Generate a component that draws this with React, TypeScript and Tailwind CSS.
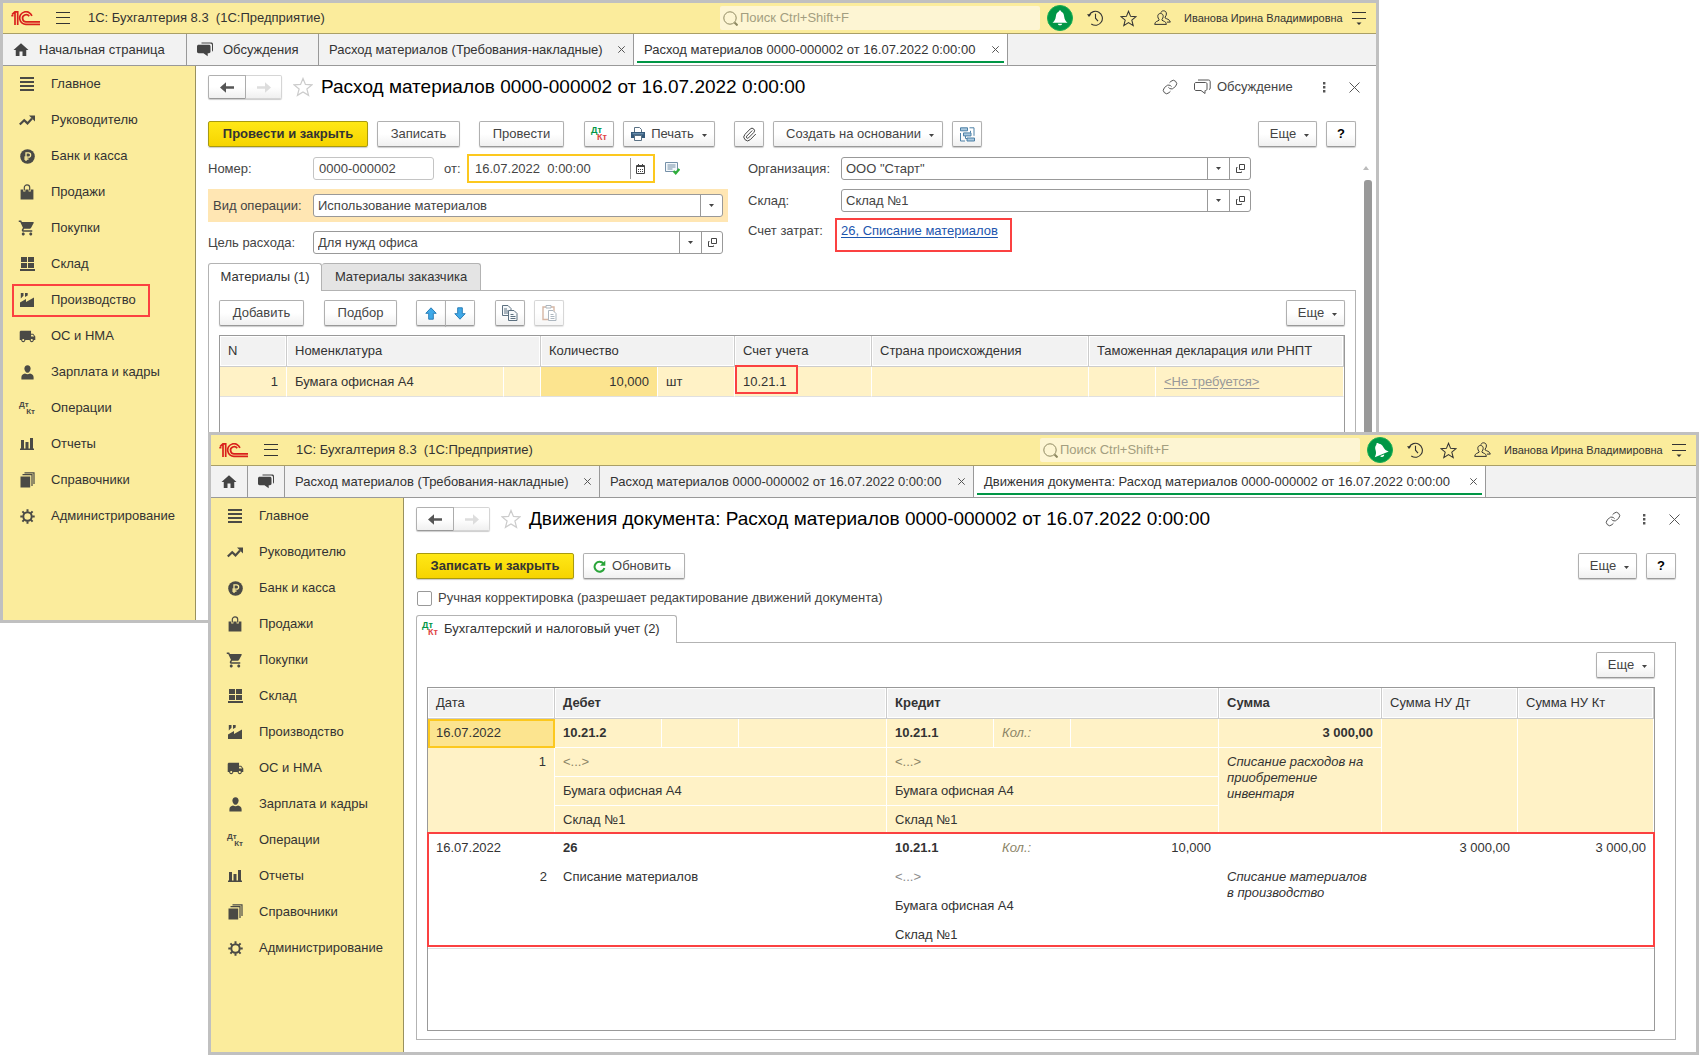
import type { ReactNode } from "react";
import clsx from "clsx";
import { Link as LinkIcon, Paperclip } from "lucide-react";
import { MdHome, MdLocalShipping, MdShoppingCart } from "react-icons/md";

const NAV: { label: string; icon: ReactNode }[] = [
  { label: "Главное", icon: <BarsIcon /> },
  { label: "Руководителю", icon: <TrendIcon /> },
  { label: "Банк и касса", icon: <RubleIcon /> },
  { label: "Продажи", icon: <BagIcon /> },
  { label: "Покупки", icon: <MdShoppingCart size={18} /> },
  { label: "Склад", icon: <WarehouseIcon /> },
  { label: "Производство", icon: <FactoryIcon /> },
  { label: "ОС и НМА", icon: <MdLocalShipping size={17} /> },
  { label: "Зарплата и кадры", icon: <PersonIcon /> },
  { label: "Операции", icon: <DtKt mono /> },
  { label: "Отчеты", icon: <ChartIcon /> },
  { label: "Справочники", icon: <BooksIcon /> },
  { label: "Администрирование", icon: <GearIcon /> },
];

export default function App() {
  return (
    <div className="min-h-screen bg-white font-['Liberation_Sans',Arial,sans-serif] text-[13px] leading-4 text-[#444]">
      <DocumentWindow />
      <MovementsWindow />
    </div>
  );
}

/* ---------- Windows ---------- */

function DocumentWindow() {
  return (
    <section className="mr-80 flex min-h-[623px] flex-col border-[3px] border-[#c0c0c0] bg-white" aria-label="Расход материалов">
      <TopBar id="doc" />
      <nav className="flex h-8 border-b border-[#999] bg-[#f2f2f2]" aria-label="Открытые окна">
        <Tab width="w-[184px]" icon={<MdHome size={18} />}>Начальная страница</Tab>
        <Tab width="w-[132px]" icon={<ChatsIcon />}>Обсуждения</Tab>
        <Tab width="w-[315px]" closable>Расход материалов (Требования-накладные)</Tab>
        <Tab width="w-[374px]" closable active>Расход материалов 0000-000002 от 16.07.2022 0:00:00</Tab>
      </nav>
      <div className="flex flex-1">
        <Sidebar marked="Производство" />
        <main className="flex min-w-0 flex-1 flex-col pl-3 pt-[9px]">
          <TitleRow title="Расход материалов 0000-000002 от 16.07.2022 0:00:00" discussion />

          <div className="mt-[22px] flex pr-5">
            <Button primary className="w-40">Провести и закрыть</Button>
            <Button className="ml-[9px] w-[83px]">Записать</Button>
            <Button className="ml-[19px] w-[85px]">Провести</Button>
            <Button className="ml-5 w-[30px]" label="Движения документа"><DtKt /></Button>
            <Button className="ml-[9px] w-[92px]"><PrinterIcon /><span className="ml-1.5">Печать</span><Caret /></Button>
            <Button className="ml-[19px] w-[30px]" label="Файлы"><Paperclip size={15} strokeWidth={1.6} /></Button>
            <Button className="ml-[9px] w-[170px]"><span className="ml-1">Создать на основании</span><Caret /></Button>
            <Button className="ml-[9px] w-[30px]" label="Структура подчиненности"><StructureIcon /></Button>
            <MoreButton className="ml-auto" />
            <Button className="ml-[9px] w-[30px] font-bold text-black">?</Button>
          </div>

          <div className="flex flex-1 pt-[7px]">
            <div className="flex min-w-0 flex-1 flex-col">
              <DocumentForm />
              <MaterialsPanel />
            </div>
            <div className="flex w-5 flex-col items-center pt-3" aria-hidden="true">
              <svg width="6" height="4"><path d="M3 0 6 4H0z" fill="#bbb" /></svg>
              <div className="ml-1 mt-2.5 w-2 flex-1 rounded-t-[3px] bg-[#999]" />
            </div>
          </div>
        </main>
      </div>
    </section>
  );
}

function DocumentForm() {
  return (
    <form className="flex gap-5">
      <div className="w-[520px]">
        <div className="flex h-[29px] items-center">
          <label htmlFor="number" className="w-[105px]">Номер:</label>
          <input id="number" defaultValue="0000-000002" className="h-[23px] w-[121px] rounded-[3px] border border-[#c4c4c4] px-[5px]" />
          <label htmlFor="date" className="ml-2.5 w-[23px]">от:</label>
          <div className="flex h-[29px] w-[188px] items-center border-2 border-[#fcc81e]">
            <input id="date" defaultValue="16.07.2022  0:00:00" className="w-[161px] px-1.5 outline-none" />
            <button type="button" aria-label="Выбрать дату" className="flex h-[21px] flex-1 items-center border-l border-[#999] pl-[5px]">
              <CalendarIcon />
            </button>
          </div>
          <span className="ml-2.5"><PostedIcon /></span>
        </div>
        <div className="mt-1.5 flex h-[33px] items-center bg-[#ffe6b3] px-[5px]">
          <label htmlFor="operation" className="w-[100px]">Вид операции:</label>
          <Combo id="operation" value="Использование материалов" />
        </div>
        <div className="mt-[9px] flex items-center pr-[5px]">
          <label htmlFor="purpose" className="w-[105px]">Цель расхода:</label>
          <Combo id="purpose" value="Для нужд офиса" open />
        </div>
      </div>
      <div className="max-w-[503px] flex-1 pt-[3px]">
        <div className="flex items-center">
          <label htmlFor="org" className="w-[93px]">Организация:</label>
          <Combo id="org" value='ООО "Старт"' open />
        </div>
        <div className="mt-[9px] flex items-center">
          <label htmlFor="store" className="w-[93px]">Склад:</label>
          <Combo id="store" value="Склад №1" open />
        </div>
        <div className="mt-2 flex h-[22px] items-center">
          <span className="w-[93px]">Счет затрат:</span>
          <span className="relative">
            <a href="#cost" className="text-[#1c55ae] underline underline-offset-2">26, Списание материалов</a>
            <Marker className="-left-1.5 -top-[5px] h-[34px] w-[177px]" />
          </span>
        </div>
      </div>
    </form>
  );
}

function MaterialsPanel() {
  return (
    <>
      <div className="mt-[9px] flex items-end" role="tablist">
        <button role="tab" aria-selected="true" className="relative -mb-px h-7 w-[114px] rounded-t-[3px] border border-b-0 border-[#b3b3b3] bg-white pb-0.5 text-[#333]">
          Материалы (1)
        </button>
        <button role="tab" aria-selected="false" className="h-[27px] w-[159px] rounded-t-[3px] border border-b-0 border-l-0 border-[#b3b3b3] bg-[#e4e4e4] text-[#333]">
          Материалы заказчика
        </button>
      </div>
      <div className="flex flex-1 flex-col border border-b-0 border-[#b3b3b3] px-2.5 pt-[9px]">
        <div className="flex">
          <Button className="w-[85px]">Добавить</Button>
          <Button className="ml-5 w-[73px]">Подбор</Button>
          <Button className="ml-[19px] w-[30px] rounded-r-none" label="Вверх"><ArrowIcon /></Button>
          <Button className="-ml-px w-[30px] rounded-l-none" label="Вниз"><ArrowIcon down /></Button>
          <Button className="ml-5 w-[30px]" label="Скопировать"><CopyIcon /></Button>
          <Button className="ml-[9px] w-[30px] opacity-50" label="Вставить"><PasteIcon /></Button>
          <MoreButton className="ml-auto" />
        </div>
        <div className="mt-[9px] flex-1 border border-b-0 border-[#999]">
          <table className="w-full table-fixed border-separate border-spacing-0 text-left text-[#333]">
            <colgroup>
              <col className="w-[67px]" />
              <col className="w-[217px]" />
              <col className="w-[37px]" />
              <col className="w-[117px]" />
              <col className="w-[77px]" />
              <col className="w-[137px]" />
              <col className="w-[217px]" />
              <col className="w-[67px]" />
              <col />
            </colgroup>
            <thead>
              <tr>
                <Th>N</Th>
                <Th span={2}>Номенклатура</Th>
                <Th span={2}>Количество</Th>
                <Th>Счет учета</Th>
                <Th>Страна происхождения</Th>
                <Th span={2}>Таможенная декларация или РНПТ</Th>
              </tr>
            </thead>
            <tbody className="[&_td]:border-b [&_td]:border-r [&_td]:border-b-[#e0e0e0] [&_td]:border-r-white [&_td]:bg-[#fff2c6] [&_td]:px-2">
              <tr className="h-[30px]">
                <td className="text-right">1</td>
                <td>Бумага офисная А4</td>
                <td />
                <td className="bg-[#fce48f]! text-right">10,000</td>
                <td>шт</td>
                <td className="relative">10.21.1<Marker className="-top-0.5 left-0 h-[29px] w-[63px]" /></td>
                <td />
                <td />
                <td><a href="#none" className="text-[#999] underline underline-offset-2">&lt;Не требуется&gt;</a></td>
              </tr>
            </tbody>
          </table>
        </div>
      </div>
    </>
  );
}

function MovementsWindow() {
  return (
    <section className="relative -mt-[191px] ml-52 flex min-h-[623px] flex-col border-[3px] border-[#c0c0c0] bg-white" aria-label="Движения документа">
      <TopBar id="mov" tilted />
      <nav className="flex h-8 border-b border-[#999] bg-[#f2f2f2]" aria-label="Открытые окна">
        <Tab width="w-[37px]" icon={<MdHome size={18} />} label="Начальная страница" />
        <Tab width="w-[37px]" icon={<ChatsIcon />} label="Обсуждения" />
        <Tab width="w-[315px]" closable>Расход материалов (Требования-накладные)</Tab>
        <Tab width="w-[374px]" closable>Расход материалов 0000-000002 от 16.07.2022 0:00:00</Tab>
        <Tab width="w-[512px]" closable active>Движения документа: Расход материалов 0000-000002 от 16.07.2022 0:00:00</Tab>
      </nav>
      <div className="flex flex-1">
        <Sidebar />
        <main className="flex min-w-0 flex-1 flex-col pb-3 pl-3 pt-[9px]">
          <TitleRow title="Движения документа: Расход материалов 0000-000002 от 16.07.2022 0:00:00" />

          <div className="mt-[22px] flex pr-5">
            <Button primary className="w-[158px]">Записать и закрыть</Button>
            <Button className="ml-[9px] w-[102px]"><RefreshIcon /><span className="ml-1.5 mr-1">Обновить</span></Button>
            <MoreButton className="ml-auto" />
            <Button className="ml-[9px] w-[30px] font-bold text-black">?</Button>
          </div>

          <label className="mt-[11px] flex items-center">
            <input type="checkbox" className="ml-px h-[15px] w-[15px] appearance-none rounded-[2px] border border-[#999] bg-white" />
            <span className="ml-1.5">Ручная корректировка (разрешает редактирование движений документа)</span>
          </label>

          <div className="mt-[9px] flex" role="tablist">
            <button role="tab" aria-selected="true" className="relative -mb-px flex h-7 w-[261px] items-center rounded-t-[3px] border border-b-0 border-[#b3b3b3] bg-white pb-0.5 pl-[5px] text-[#333]">
              <DtKt />
              <span className="ml-1.5">Бухгалтерский и налоговый учет (2)</span>
            </button>
          </div>
          <div className="mr-5 flex flex-1 flex-col border border-[#b3b3b3] pb-2 pl-2.5 pr-5 pt-[9px]">
            <MoreButton className="self-end" />
            <MovementsTable />
          </div>
        </main>
      </div>
    </section>
  );
}

function MovementsTable() {
  return (
    <div className="mt-[9px] flex-1 border border-[#999]">
      <table className="w-full table-fixed border-separate border-spacing-0 text-left text-[#333] [&_tbody_td]:px-2 [&_tbody_td]:pt-1.5 [&_tbody_td]:align-top">
        <colgroup>
          <col className="w-[127px]" />
          <col className="w-[107px]" />
          <col className="w-[77px]" />
          <col />
          <col className="w-[107px]" />
          <col className="w-[77px]" />
          <col />
          <col className="w-[163px]" />
          <col className="w-[136px]" />
          <col className="w-[136px]" />
        </colgroup>
        <thead>
          <tr>
            <Th>Дата</Th>
            <Th span={3} bold>Дебет</Th>
            <Th span={3} bold>Кредит</Th>
            <Th bold>Сумма</Th>
            <Th>Сумма НУ Дт</Th>
            <Th>Сумма НУ Кт</Th>
          </tr>
        </thead>
        <tbody className="[&_td]:border-b [&_td]:border-r [&_td]:border-white [&_td]:bg-[#fff2c6]">
          <tr className="h-[29px]">
            <td className="bg-[#fce48f]! outline-2 -outline-offset-2 outline-[#fcc81e]">16.07.2022</td>
            <td className="font-bold">10.21.2</td>
            <td />
            <td />
            <td className="font-bold">10.21.1</td>
            <td className="italic text-[#8c8567]">Кол.:</td>
            <td />
            <td className="text-right font-bold">3 000,00</td>
            <td rowSpan={4} />
            <td rowSpan={4} />
          </tr>
          <tr className="h-[29px]">
            <td rowSpan={3} className="text-right">1</td>
            <td colSpan={3} className="text-[#8c8567]">&lt;...&gt;</td>
            <td colSpan={3} className="text-[#8c8567]">&lt;...&gt;</td>
            <td rowSpan={3} className="italic">Списание расходов на приобретение инвентаря</td>
          </tr>
          <tr className="h-[29px]">
            <td colSpan={3}>Бумага офисная А4</td>
            <td colSpan={3}>Бумага офисная А4</td>
          </tr>
          <tr className="h-7">
            <td colSpan={3}>Склад №1</td>
            <td colSpan={3}>Склад №1</td>
          </tr>
        </tbody>
        <tbody className="relative">
          <tr className="h-[29px]">
            <td>16.07.2022<Marker className="-left-px -right-px -top-0.5 bottom-0.5" /></td>
            <td colSpan={3} className="font-bold">26</td>
            <td className="font-bold">10.21.1</td>
            <td className="italic text-[#8c8567]">Кол.:</td>
            <td className="text-right">10,000</td>
            <td />
            <td className="text-right">3 000,00</td>
            <td className="text-right">3 000,00</td>
          </tr>
          <tr className="h-[29px]">
            <td className="text-right">2</td>
            <td colSpan={3}>Списание материалов</td>
            <td colSpan={3} className="text-[#8c8c8c]">&lt;...&gt;</td>
            <td rowSpan={3} className="border-b border-[#e0e0e0] italic">Списание материалов в производство</td>
            <td rowSpan={3} className="border-b border-[#e0e0e0]" />
            <td rowSpan={3} className="border-b border-[#e0e0e0]" />
          </tr>
          <tr className="h-[29px]">
            <td />
            <td colSpan={3} />
            <td colSpan={3}>Бумага офисная А4</td>
          </tr>
          <tr className="h-7 [&_td]:border-b [&_td]:border-[#e0e0e0]">
            <td />
            <td colSpan={3} />
            <td colSpan={3}>Склад №1</td>
          </tr>
        </tbody>
      </table>
    </div>
  );
}

/* ---------- Shared parts ---------- */

function TopBar({ id, tilted }: { id: string; tilted?: boolean }) {
  return (
    <header className="flex h-[31px] items-center border-b border-[#aa9f66] bg-[#fbec9c] pl-2 pr-2.5 text-[#333]">
      <LogoIcon />
      <button aria-label="Главное меню" className="ml-4">
        <svg width="14" height="12" stroke="#333"><path d="M0 .5h14M0 5.5h14M0 11.5h14" /></svg>
      </button>
      <span className="ml-[18px] whitespace-pre">1С: Бухгалтерия 8.3  (1С:Предприятие)</span>
      <div className="ml-auto flex h-6 w-80 items-center rounded-[2px] bg-[#fdf5d3] pl-[3px]">
        <svg width="15" height="15" viewBox="0 0 15 15" fill="none" stroke="#8f8962" aria-hidden="true">
          <circle cx="7" cy="7" r="6.2" />
          <path d="m11.5 11.5 3 3" strokeWidth="2" />
        </svg>
        <input id={`${id}-search`} aria-label="Поиск" placeholder="Поиск Ctrl+Shift+F" className="ml-0.5 flex-1 placeholder:text-[#a39e80] outline-none" />
      </div>
      <button aria-label="Уведомления" className="ml-[7px]"><BellIcon tilted={tilted} /></button>
      <button aria-label="История" className="ml-3.5"><HistoryIcon /></button>
      <button aria-label="Избранное" className="ml-[17px]"><StarIcon size={17} /></button>
      <button aria-label="Пользователи" className="ml-[17px]"><UsersIcon /></button>
      <a href="#user" className="ml-[13px] w-[155px] whitespace-nowrap text-[11px]">Иванова Ирина Владимировна</a>
      <button aria-label="Сервис и настройки" className="ml-[13px]">
        <svg width="14" height="13" fill="none" stroke="#333"><path d="M0 .5h14M0 6.5h14" /><path d="M4.5 10.5h5L7 13z" fill="#333" stroke="none" /></svg>
      </button>
    </header>
  );
}

function Tab({ width, icon, label, closable, active, children }: {
  width: string; icon?: ReactNode; label?: string; closable?: boolean; active?: boolean; children?: ReactNode;
}) {
  return (
    <div className={clsx("relative flex items-center border-r border-[#999] px-2 text-[#333]", width, active && "bg-white")}>
      <a href="#tab" aria-label={label} className="flex min-w-0 flex-1 items-center whitespace-nowrap">
        {icon && <span className="flex w-5 shrink-0 justify-center text-[#444]">{icon}</span>}
        {children && <span className={icon ? "ml-2" : "ml-0.5"}>{children}</span>}
      </a>
      {closable && (
        <button aria-label="Закрыть вкладку">
          <svg width="7" height="7" stroke="#555"><path d="m.3.3 6.4 6.4m0-6.4-6.4 6.4" /></svg>
        </button>
      )}
      {active && <span className="absolute inset-x-[3px] bottom-0.5 h-0.5 bg-[#009646]" />}
    </div>
  );
}

function Sidebar({ marked }: { marked?: string }) {
  return (
    <aside className="w-[193px] shrink-0 border-r border-[#99915f] bg-[#fbec9c]">
      <ul>
        {NAV.map((item) => (
          <li key={item.label} className="relative">
            <a href="#section" className="flex h-9 items-center pl-3.5 text-[#333]">
              <span className="flex w-5 justify-center text-[#4a4a45]">{item.icon}</span>
              <span className="ml-3.5">{item.label}</span>
            </a>
            {item.label === marked && <Marker className="left-[9px] top-0.5 h-[33px] w-[138px]" />}
          </li>
        ))}
      </ul>
    </aside>
  );
}

function TitleRow({ title, discussion }: { title: string; discussion?: boolean }) {
  return (
    <div className="flex h-6 items-center pr-4 text-[#555]">
      <Button className="h-6! w-[38px] rounded-r-none" label="Назад"><NavArrow /></Button>
      <Button className="h-6! w-9 rounded-l-none border-l-0 border-[#d5d5d5]!" label="Вперед"><NavArrow forward /></Button>
      <button aria-label="В избранное" className="ml-[11px] text-[#ccc]"><StarIcon size={20} /></button>
      <h1 className="ml-2 flex-1 whitespace-nowrap text-[19px] leading-6 text-black">{title}</h1>
      <button aria-label="Ссылка"><LinkIcon size={16} strokeWidth={1.5} /></button>
      {discussion && (
        <button className="ml-4 flex items-center text-[#444]">
          <DiscussIcon />
          <span className="ml-1.5 w-[84px] text-left">Обсуждение</span>
        </button>
      )}
      <button aria-label="Еще действия" className="ml-[22px] w-1">
        <svg width="3" height="11" fill="#555"><path d="M0 0h2.4v2.4H0zM0 4h2.4v2.4H0zM0 8h2.4v2.4H0z" /></svg>
      </button>
      <button aria-label="Закрыть" className="ml-[22px]">
        <svg width="11" height="11" stroke="#555"><path d="m.5.5 10 10m0-10-10 10" /></svg>
      </button>
    </div>
  );
}

function Button({ primary, label, className, children }: {
  primary?: boolean; label?: string; className?: string; children: ReactNode;
}) {
  return (
    <button
      type="button"
      aria-label={label}
      className={clsx(
        "flex h-[26px] shrink-0 items-center justify-center whitespace-nowrap rounded-[2px] border shadow-[0_1px_1px_rgba(0,0,0,0.2)]",
        primary
          ? "border-[#a89a10] bg-linear-to-b from-[#ffe815] to-[#f6d400] font-bold text-[#333]"
          : "border-[#b0b0b0] border-b-[#999] bg-linear-to-b from-white from-50% to-[#f0f0f0]",
        className,
      )}
    >
      {children}
    </button>
  );
}

function MoreButton({ className }: { className?: string }) {
  return <Button className={clsx("w-[59px]", className)}><span className="ml-1">Еще</span><Caret /></Button>;
}

function Combo({ id, value, open }: { id: string; value: string; open?: boolean }) {
  return (
    <div className="flex h-[23px] flex-1 rounded-[3px] border border-[#999] bg-white">
      <div className="relative flex flex-1">
        <select id={id} className="w-full appearance-none rounded-[3px] pl-1 pr-6 outline-none">
          <option>{value}</option>
        </select>
        <span className="pointer-events-none absolute inset-y-0 right-0 flex w-[22px] items-center justify-center border-l border-[#999]">
          <svg width="5" height="3"><path d="M0 0h5L2.5 3z" fill="#444" /></svg>
        </span>
      </div>
      {open && (
        <button type="button" aria-label="Открыть" className="flex w-[21px] items-center justify-center border-l border-[#999]">
          <svg width="9" height="9" fill="none" stroke="#444"><path d="M3.5.5h5v5h-5zM1.5 3.5h-1v5h5v-1" /></svg>
        </button>
      )}
    </div>
  );
}

function Th({ span, bold, children }: { span?: number; bold?: boolean; children: ReactNode }) {
  return (
    <th colSpan={span} className={clsx("h-[31px] whitespace-nowrap border-b border-r border-[#ccc] bg-[#f2f2f2] px-2 shadow-[inset_0_0_0_1px_#fff]", bold ? "font-bold" : "font-normal")}>
      {children}
    </th>
  );
}

function Marker({ className }: { className: string }) {
  return <span className={clsx("pointer-events-none absolute border-2 border-[#fb4141]", className)} />;
}

function Caret() {
  return <svg className="ml-2 mt-0.5" width="5" height="3"><path d="M0 0h5L2.5 3z" fill="#444" /></svg>;
}

/* ---------- Icons ---------- */

function DtKt({ mono }: { mono?: boolean }) {
  return (
    <span className={clsx("flex w-4 flex-col font-bold leading-[7px]", mono ? "text-[8px]" : "text-[9px]")}>
      <span className={clsx("text-left", mono ? "text-[#4a4a45]" : "text-[#009646]")}>Дт</span>
      <span className={clsx("text-right", mono ? "text-[#4a4a45]" : "text-[#e04545]")}>Кт</span>
    </span>
  );
}

function LogoIcon() {
  return (
    <svg width="29" height="15" viewBox="0 0 29 15" fill="none" stroke="#d9201c" strokeWidth="1.7" aria-label="1С">
      <path d="M.3 4.6h2.1M1.2 3.4 4 .8V14M3.4.8h3.3V14" />
      <path d="M20.9 4.9a6.3 6.3 0 1 0-5.3 8.4H29" />
      <path d="M18.2 5.3a3.6 3.6 0 1 0-2.6 5.5H29" />
    </svg>
  );
}

function BellIcon({ tilted }: { tilted?: boolean }) {
  return (
    <svg width="26" height="26" viewBox="0 0 26 26">
      <circle cx="13" cy="13" r="12.5" fill="#009646" stroke="#18ad52" />
      <g transform={tilted ? "rotate(-22 13 13)" : undefined} fill="#fff">
        <path d="M13 5.5c.9 0 1.2.6 1.3 1.2 2 .8 2.6 2.5 2.9 5 .3 2.6 1.2 4.2 3.3 6h-15c2.1-1.8 3-3.4 3.3-6 .3-2.5.9-4.2 2.900-5 .1-.6.4-1.2 1.3-1.2z" />
        <path d="M10.8 18.7h4.4c-.3 1-1.1 1.600-2.200 1.600s-1.900-.6-2.200-1.600z" />
      </g>
    </svg>
  );
}

function HistoryIcon() {
  return (
    <svg width="16" height="16" viewBox="0 0 16 16" fill="none" stroke="#333" strokeWidth="1.1">
      <path d="M2.100 5.200A7 7 0 1 1 4.300 14" />
      <path d="M8.500 3.800v4.400l2.500 3" />
      <path d="M0 4.200h4.300L2 6.900z" fill="#333" stroke="none" />
    </svg>
  );
}

function StarIcon({ size }: { size: number }) {
  return (
    <svg width={size} height={size} viewBox="0 0 18 18" fill="none" stroke="currentColor" strokeWidth="1.100">
      <path d="m9 1.300 2.200 5.400 5.800.4-4.500 3.700 1.500 5.700L9 13.400l-5 3.100 1.500-5.700L1 7.100l5.800-.4z" />
    </svg>
  );
}

function UsersIcon() {
  return (
    <svg width="17" height="16" viewBox="0 0 17 16" fill="none" stroke="#333">
      <path d="M6.500 3.500c-1.800 0-2.800 1.200-2.700 2.900 0 1.300.5 2.200 1.200 2.900v.9C4 11.300.9 11.100.7 14.400h11.700c-.2-3.300-3.400-3.100-4.400-4.200v-.9c.7-.7 1.200-1.600 1.200-2.900.1-1.700-.9-2.900-2.700-2.900z" />
      <path d="M6.800 2.700C7.300 1.500 8.300.8 9.500.8c2 0 3 1.400 2.900 3.200-.1 1.400-.6 2.300-1.300 3v.9c1 1.100 4.800 1.200 5.200 4.200h-3.400" />
    </svg>
  );
}

function ChatsIcon() {
  return (
    <svg width="16" height="15" viewBox="0 0 16 15" fill="#444">
      <path d="M4.500 1.600V.6h9.800c1 0 1.700.7 1.700 1.700V8c0 .8-.4 1.400-1 1.600V3.400c0-1-.7-1.800-1.800-1.800z" />
      <path d="M1.700 2.700h10.100c1 0 1.700.7 1.700 1.700v5.200c0 1-.7 1.700-1.700 1.700h-1.100v3l-4.200-3H1.700c-1 0-1.700-.7-1.700-1.700V4.400c0-1 .7-1.700 1.700-1.700z" />
    </svg>
  );
}

function DiscussIcon() {
  return (
    <svg width="17" height="16" viewBox="0 0 17 16" fill="none" stroke="#555">
      <path d="M2 3.500h9.500c.9 0 1.500.6 1.500 1.500v5c0 .9-.6 1.500-1.500 1.500H11v3l-4-3H2c-.9 0-1.500-.6-1.500-1.500V5c0-.9.600-1.500 1.500-1.500z" />
      <path d="M4 1h10.500c1 0 1.700.7 1.700 1.600v6.600c0 .7-.5 1.300-1.200 1.300" />
    </svg>
  );
}

function NavArrow({ forward }: { forward?: boolean }) {
  return (
    <svg width="14" height="11" viewBox="0 0 14 11" fill={forward ? "#ddd" : "#555"} transform={forward ? "scale(-1 1)" : undefined}>
      <path d="M0 5.500 6 .3v3.900h8v2.600H6v3.900z" />
    </svg>
  );
}

function BarsIcon() {
  return <svg width="14" height="14" fill="currentColor"><path d="M0 0h14v2H0zM0 4h14v2H0zM0 8h14v2H0zM0 12h14v2H0z" /></svg>;
}

function TrendIcon() {
  return (
    <svg width="16" height="11" viewBox="0 0 16 11">
      <path d="m.8 9.500 4.400-4.300 3.300 3.200L13 3.600" fill="none" stroke="currentColor" strokeWidth="2.200" />
      <path d="M10 .5h6v6z" fill="currentColor" />
    </svg>
  );
}

function RubleIcon() {
  return (
    <svg width="15" height="15" viewBox="0 0 15 15">
      <circle cx="7.500" cy="7.500" r="7.300" fill="currentColor" />
      <path d="M6 12V3.800h2.500a2.100 2.100 0 0 1 0 4.300H4.300M4.300 10h4.200" fill="none" stroke="#fbec9c" strokeWidth="1.300" />
    </svg>
  );
}

function BagIcon() {
  return (
    <svg width="14" height="16" viewBox="0 0 14 16">
      <path d="M.6 5.500h12.800V15.500H.6z" fill="currentColor" />
      <path d="M4.300 7.500V4c0-3.800 5.400-3.800 5.400 0v3.500" fill="none" stroke="#fbec9c" strokeWidth="2.200" />
      <path d="M4.300 6.500V3.600c0-3.600 5.400-3.600 5.400 0v2.900" fill="none" stroke="currentColor" strokeWidth="1.200" />
    </svg>
  );
}

function WarehouseIcon() {
  return <svg width="15" height="14" fill="currentColor"><path d="M1 0h6v5H1zM8 0h6v5H8zM1 6h6v5H1zM8 6h6v5H8zM0 12h15v2H0z" /></svg>;
}

function FactoryIcon() {
  return (
    <svg width="14" height="14" viewBox="0 0 14 14" fill="currentColor">
      <path d="M0 14V9.400L6 6v3l8-4.500V14z" />
      <path d="M.8 0h2.700v2.800L.8 5.500zM5 0h2.700v2.500L5 4z" />
    </svg>
  );
}

function PersonIcon() {
  return (
    <svg width="13" height="15" viewBox="0 0 13 15" fill="currentColor">
      <path d="M6.500.3c2 0 3.100 1.300 3.100 3.200 0 1.800-1.200 4.300-3.100 4.300S3.400 5.300 3.400 3.500C3.400 1.600 4.500.3 6.500.3z" />
      <path d="M.4 14.500v-2.300c0-2 1.600-3.400 3.600-3.700 1.500 1.100 3.500 1.100 5 0 2 .3 3.600 1.700 3.600 3.700v2.300z" />
    </svg>
  );
}

function ChartIcon() {
  return <svg width="14" height="12" fill="currentColor"><path d="M0 10.500h14V12H0zM1 2h3v8.500H1zM5.500 4h3v6.500h-3zM10 0h3v10.500h-3z" /></svg>;
}

function BooksIcon() {
  return (
    <svg width="15" height="16" viewBox="0 0 15 16">
      <path d="M.5 4.500h9.700v11H.5z" fill="currentColor" />
      <path d="M2.500 2.600h9.500V14M4.500.8h9.500V12" fill="none" stroke="currentColor" strokeWidth="1.200" />
    </svg>
  );
}

function GearIcon() {
  return (
    <svg width="15" height="15" viewBox="0 0 15 15" fill="none" stroke="currentColor">
      <circle cx="7.500" cy="7.500" r="4.200" strokeWidth="2" />
      <path d="M7.500.3v2.500M7.500 12.200v2.500M.3 7.500h2.500M12.200 7.500h2.500M2.400 2.400l1.800 1.800M10.800 10.800l1.800 1.800M2.400 12.600l1.800-1.800M10.800 4.200l1.800-1.800" strokeWidth="2" />
    </svg>
  );
}

function PrinterIcon() {
  return (
    <svg width="14" height="14" viewBox="0 0 14 14">
      <path d="M3.500 5V.5h5l2 2V5" fill="#fff" stroke="#5a7184" />
      <path d="M0 5h14v6H0z" fill="#34597a" />
      <path d="M1.500 6.800h11" stroke="#7fa3c0" />
      <path d="M3.500 8.500h7v5h-7z" fill="#fff" stroke="#5a7184" />
    </svg>
  );
}

function StructureIcon() {
  return (
    <svg width="15" height="15" viewBox="0 0 15 15" fill="#a9c8de" stroke="#4d80a6">
      <path d="M.5.8h7v3h-7zM3.500 5.900H11v3H3.500zM7 11h7.500v3H7z" />
      <path d="M9.500.8h4.500v8M10.500 3.800v2M.5 6v8H5M5.500 9v2.500H7" fill="none" />
    </svg>
  );
}

function CalendarIcon() {
  return (
    <svg width="9" height="10" viewBox="0 0 9 10" fill="none" stroke="#444">
      <path d="M.5 1.500h8v8h-8z" />
      <path d="M.5 2.500h8M2.500 0v2M6.500 0v2" />
      <path d="M2 5.500h5M2 7.500h5" strokeDasharray="1 1" />
    </svg>
  );
}

function PostedIcon() {
  return (
    <svg width="15" height="13" viewBox="0 0 15 13" fill="none">
      <path d="M.5.5h12v9H.5z" fill="#f4f8fb" stroke="#7590a8" />
      <path d="M2.500 3h8M2.500 5h8M2.500 7h5" stroke="#7590a8" />
      <path d="m8.500 9 2.200 2.300L14.300 7" stroke="#2fae3a" strokeWidth="2.200" />
    </svg>
  );
}

function ArrowIcon({ down }: { down?: boolean }) {
  return (
    <svg width="12" height="13" viewBox="0 0 12 13" transform={down ? "scale(1 -1)" : undefined}>
      <path d="M6 .8 11.200 6.300H8.300v5.900H3.700V6.300H.8z" fill="#3fa9e8" stroke="#2b7fb8" />
    </svg>
  );
}

function CopyIcon() {
  return (
    <svg width="16" height="16" viewBox="0 0 16 16" fill="#f6f9fb" stroke="#5c7080">
      <path d="M.5.5h5.500l3 3v7H.5z" />
      <path d="M2 4h3M2 6h4M2 8h4" />
      <path d="M6.500 5.500H12l3 3v7H6.500z" />
      <path d="M8.500 9.500h3M8.500 11.500h5M8.500 13.500h5" />
    </svg>
  );
}

function PasteIcon() {
  return (
    <svg width="15" height="16" viewBox="0 0 15 16" fill="none" stroke="#5c7080">
      <path d="M1 2h11v12.500H1z" stroke="#b0704c" strokeWidth="1.400" />
      <path d="M4 .5h5v2.500H4z" fill="#fff" />
      <path d="M6.500 5.500H11l3 3v7H6.500z" fill="#fff" />
      <path d="M8.500 9.500h3M8.500 11.500h4M8.500 13.500h4" />
    </svg>
  );
}

function RefreshIcon() {
  return (
    <svg width="13" height="13" viewBox="0 0 13 13">
      <path d="M10.500 3.600A5 5 0 1 0 11.400 8" fill="none" stroke="#2aa53a" strokeWidth="2" />
      <path d="M12.300.5v5.300H7z" fill="#2aa53a" />
    </svg>
  );
}
